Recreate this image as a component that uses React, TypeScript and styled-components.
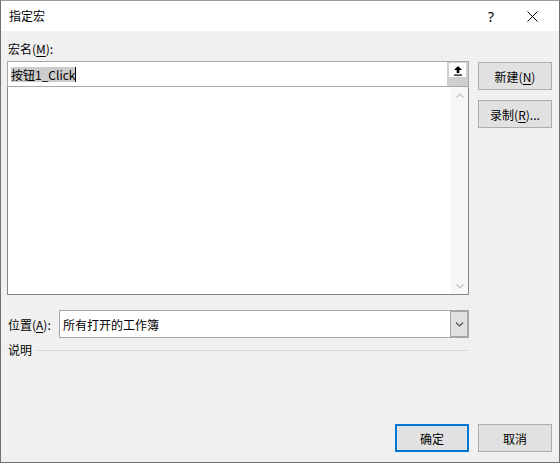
import React from 'react';
import styled, { createGlobalStyle } from 'styled-components';

const Global = createGlobalStyle`
  html, body { margin: 0; padding: 0; background: #ffffff; }
  body {
    font-family: "Noto Sans CJK SC", "Microsoft YaHei", sans-serif;
    font-size: 12px;
    color: #000;
  }
  * { box-sizing: border-box; }
`;

const Window = styled.div`
  width: 560px;
  height: 463px;
  border: 1px solid #707070;
  border-top-color: #9a9a9a;
  display: flex;
  flex-direction: column;
  background: #f0f0f0;
`;

const TitleBar = styled.div`
  height: 30px;
  background: #ffffff;
  display: flex;
  align-items: center;
  padding: 0 4px 0 8px;
  flex: none;
`;

const TitleText = styled.div`
  font-size: 12px;
  line-height: 16px;
`;

const TitleButton = styled.div<{ $w: number }>`
  width: ${p => p.$w}px;
  height: 30px;
  display: flex;
  align-items: center;
  justify-content: center;
  font-family: "Segoe UI", "Noto Sans", sans-serif;
  font-size: 14px;
`;

const TitleButtons = styled.div`
  margin-left: auto;
  display: flex;
  gap: 6px;
`;

const Body = styled.div`
  flex: 1;
  display: flex;
  flex-direction: column;
  padding: 9px 7px 10px 6px;
`;

const Label = styled.div`
  height: 18px;
  line-height: 18px;
  padding-left: 1px;
  white-space: nowrap;
`;

const Key = styled.span`
  text-decoration: underline;
  text-underline-offset: 2px;
`;

const Grid = styled.div<{ $mt?: number }>`
  display: grid;
  grid-template-columns: 462px 74px;
  column-gap: 9px;
  margin-top: ${p => p.$mt ?? 0}px;
`;

const LeftCol = styled.div`
  display: flex;
  flex-direction: column;
`;

const RightCol = styled.div`
  display: flex;
  flex-direction: column;
  gap: 10px;
  padding-top: 1px;
`;

const NameInput = styled.div`
  height: 26px;
  border: 1px solid #a8a8a8;
  background: #fff;
  display: flex;
  position: relative;
  z-index: 1;
`;

const NameText = styled.div`
  flex: 1;
  display: flex;
  align-items: center;
  padding-left: 3px;
`;

const Selected = styled.span`
  background: #cccccc;
  line-height: 15px;
  height: 15px;
  border-right: 1px solid #000;
`;

const UploadBox = styled.div`
  width: 21px;
  background: #cfcfcf;
  padding: 1px 2px 0 2px;
`;

const UploadInner = styled.div`
  height: 14px;
  background: #fff;
  display: flex;
  align-items: center;
  justify-content: center;
`;

const ListBox = styled.div`
  height: 209px;
  margin-top: -1px;
  border: 1px solid #82878f;
  background: #fff;
  display: flex;
  justify-content: flex-end;
`;

const ScrollBar = styled.div`
  width: 17px;
  background: #f7f7f7;
  display: flex;
  flex-direction: column;
  justify-content: space-between;
  align-items: center;
  padding: 6px 0 5px;
`;

const Button = styled.div<{ $default?: boolean; $h?: number }>`
  height: ${p => p.$h ?? 28}px;
  width: 74px;
  background: #e1e1e1;
  border: ${p => (p.$default ? '2px solid #0078d7' : '1px solid #adadad')};
  display: flex;
  align-items: center;
  justify-content: center;
  white-space: nowrap;
`;

const LocationRow = styled.div`
  width: 462px;
  margin-top: 15px;
  display: flex;
  align-items: center;
`;

const LocationLabel = styled.div`
  width: 52px;
  padding-left: 1px;
  white-space: nowrap;
`;

const Combo = styled.div`
  flex: 1;
  height: 28px;
  border: 1px solid #a6a6a6;
  background: #fff;
  display: flex;
`;

const ComboText = styled.div`
  flex: 1;
  display: flex;
  align-items: center;
  padding-left: 3px;
`;

const ComboButton = styled.div`
  width: 18px;
  background: #e0e0e0;
  box-shadow: inset 0 0 0 1px #a6a6a6;
  display: flex;
  align-items: center;
  justify-content: center;
`;

const DescRow = styled.div`
  width: 462px;
  margin-top: 5px;
  height: 14px;
  display: flex;
  align-items: center;
  gap: 4px;
`;

const DescLine = styled.div`
  flex: 1;
  height: 1px;
  background: #dadada;
`;

const Spacer = styled.div`
  flex: 1;
`;

const OkCell = styled.div`
  display: flex;
  justify-content: flex-end;
`;

const UploadIcon = () => (
  <svg width="10" height="11" viewBox="0 0 10 11">
    <path d="M5 1 L9 5 L6.3 5 L6.3 8 L3.7 8 L3.7 5 L1 5 Z" fill="#000" />
    <rect x="1" y="9.5" width="8" height="1.2" fill="#000" />
  </svg>
);

const Chevron = ({ up, color, w = 8 }: { up?: boolean; color: string; w?: number }) => (
  <svg width={w} height="5" viewBox="0 0 8 5">
    <path d={up ? 'M0.5 4.5 L4 1 L7.5 4.5' : 'M0.5 0.5 L4 4 L7.5 0.5'} fill="none" stroke={color} strokeWidth="1.2" />
  </svg>
);

const CloseIcon = () => (
  <svg width="11" height="11" viewBox="0 0 11 11">
    <path d="M0.5 0.5 L10.5 10.5 M10.5 0.5 L0.5 10.5" stroke="#000" strokeWidth="1" />
  </svg>
);

export default function App() {
  return (
    <>
      <Global />
      <Window>
        <TitleBar>
          <TitleText>指定宏</TitleText>
          <TitleButtons>
            <TitleButton $w={24}>?</TitleButton>
            <TitleButton $w={46}>
              <CloseIcon />
            </TitleButton>
          </TitleButtons>
        </TitleBar>
        <Body>
          <Label>
            宏名(<Key>M</Key>):
          </Label>
          <Grid $mt={3}>
            <LeftCol>
              <NameInput>
                <NameText>
                  <Selected>按钮1_Click</Selected>
                </NameText>
                <UploadBox>
                  <UploadInner>
                    <UploadIcon />
                  </UploadInner>
                </UploadBox>
              </NameInput>
              <ListBox>
                <ScrollBar>
                  <Chevron up color="#c2c2c2" />
                  <Chevron color="#c2c2c2" />
                </ScrollBar>
              </ListBox>
            </LeftCol>
            <RightCol>
              <Button>
                新建(<Key>N</Key>)
              </Button>
              <Button>
                录制(<Key>R</Key>)...
              </Button>
            </RightCol>
          </Grid>
          <LocationRow>
            <LocationLabel>
              位置(<Key>A</Key>):
            </LocationLabel>
            <Combo>
              <ComboText>所有打开的工作簿</ComboText>
              <ComboButton>
                <Chevron color="#505050" w={9} />
              </ComboButton>
            </Combo>
          </LocationRow>
          <DescRow>
            <Label>说明</Label>
            <DescLine />
          </DescRow>
          <Spacer />
          <Grid>
            <OkCell>
              <Button $default>确定</Button>
            </OkCell>
            <Button>取消</Button>
          </Grid>
        </Body>
      </Window>
    </>
  );
}
